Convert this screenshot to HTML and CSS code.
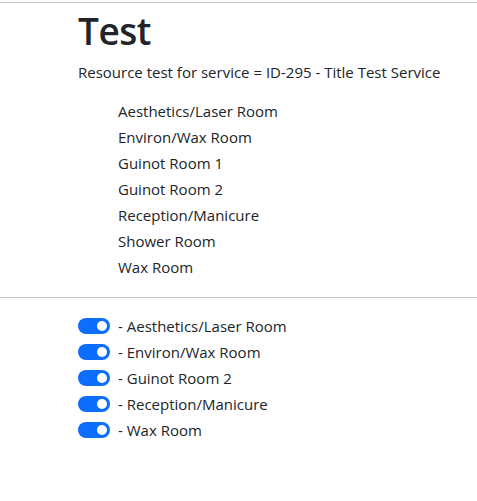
FILE: index.html
```html
<!DOCTYPE html>
<html lang="en">
<head>
  <meta charset="UTF-8" />
  <meta name="viewport" content="width=device-width, initial-scale=1.0" />
  <title>Test</title>
  <link rel="stylesheet" href="styles.css">
</head>
<body>
  <hr class="rule rule-top">
  <div class="container">
    <h1>Test</h1>
    <p class="lead-line">Resource test for service = ID-295 - Title Test Service</p>

    <!-- all resources -->
    <ul class="resource-list">
      <li>Aesthetics/Laser Room</li>
      <li>Environ/Wax Room</li>
      <li>Guinot Room 1</li>
      <li>Guinot Room 2</li>
      <li>Reception/Manicure</li>
      <li>Shower Room</li>
      <li>Wax Room</li>
    </ul>
  </div>

  <hr class="rule">

  <!-- assigned resources -->
  <div class="container">
    <div class="switch-list">
      <label class="switch-row"><span class="switch"></span> - Aesthetics/Laser Room</label>
      <label class="switch-row"><span class="switch"></span> - Environ/Wax Room</label>
      <label class="switch-row"><span class="switch"></span> - Guinot Room 2</label>
      <label class="switch-row"><span class="switch"></span> - Reception/Manicure</label>
      <label class="switch-row"><span class="switch"></span> - Wax Room</label>
    </div>
  </div>
</body>
</html>
```

FILE: styles.css
```css
body {
  font-family: "Open Sans", "Noto Sans", sans-serif;
  font-size: 15px;
  color: #212529;
  background-color: #ffffff;
  margin: 0;
  padding: 0;
}
.rule {
  border: none;
  border-top: 1px solid #c6c6c6;
  margin: 0;
}
.rule-top {
  margin-top: 2px;
}
.container {
  padding-left: 78px;
}
h1 {
  font-size: 37px;
  font-weight: 600;
  line-height: 50px;
  margin: 3px 0 0 0;
  letter-spacing: -0.5px;
}
.lead-line {
  margin: 3px 0 0 0;
  line-height: 26px;
}
.resource-list {
  list-style: none;
  margin: 13px 0 0 0;
  padding: 0 0 0 40px;
}
.resource-list li {
  line-height: 26px;
}
.container + .rule {
  margin-top: 17px;
}
.switch-list {
  display: flex;
  flex-direction: column;
  margin-top: 15px;
}
.switch-row {
  display: flex;
  align-items: center;
  gap: 8px;
  height: 26px;
}
.switch {
  position: relative;
  width: 32px;
  height: 16px;
  border-radius: 8px;
  background-color: #0d6efd;
  flex-shrink: 0;
}
.switch::after {
  content: "";
  position: absolute;
  right: 3px;
  top: 3px;
  width: 10px;
  height: 10px;
  border-radius: 50%;
  background-color: #ffffff;
}
```
